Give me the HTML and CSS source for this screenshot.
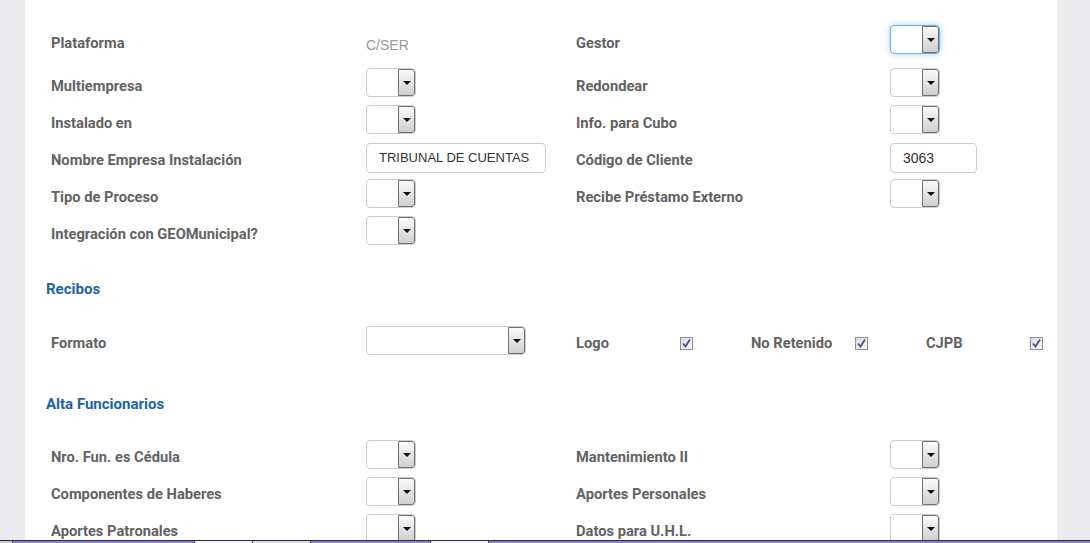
FILE: index.html
```html
<!DOCTYPE html>
<html lang="es">
<head>
<meta charset="utf-8">
<title>Parámetros</title>
<link rel="stylesheet" href="styles.css">
</head>
<body>
<div class="screen">
  <div class="panel">
    <div class="row first">
      <div class="label">Plataforma</div>
      <div class="value">C/SER</div>
      <div class="label">Gestor</div>
      <div class="field"><span class="select focus"><span class="btn"><span class="tri"></span></span></span></div>
    </div>
    <div class="row">
      <div class="label">Multiempresa</div>
      <div class="field"><span class="select"><span class="btn"><span class="tri"></span></span></span></div>
      <div class="label">Redondear</div>
      <div class="field"><span class="select"><span class="btn"><span class="tri"></span></span></span></div>
    </div>
    <div class="row">
      <div class="label">Instalado en</div>
      <div class="field"><span class="select"><span class="btn"><span class="tri"></span></span></span></div>
      <div class="label">Info. para Cubo</div>
      <div class="field"><span class="select"><span class="btn"><span class="tri"></span></span></span></div>
    </div>
    <div class="row">
      <div class="label">Nombre Empresa Instalación</div>
      <div class="field"><span class="input wide">TRIBUNAL DE CUENTAS</span></div>
      <div class="label">Código de Cliente</div>
      <div class="field"><span class="input num">3063</span></div>
    </div>
    <div class="row">
      <div class="label">Tipo de Proceso</div>
      <div class="field"><span class="select"><span class="btn"><span class="tri"></span></span></span></div>
      <div class="label">Recibe Préstamo Externo</div>
      <div class="field"><span class="select"><span class="btn"><span class="tri"></span></span></span></div>
    </div>
    <div class="row">
      <div class="label">Integración con GEOMunicipal?</div>
      <div class="field"><span class="select"><span class="btn"><span class="tri"></span></span></span></div>
    </div>

    <h2 class="section first-section">Recibos</h2>
    <div class="row formato">
      <div class="label">Formato</div>
      <div class="field"><span class="select long"><span class="btn"><span class="tri"></span></span></span></div>
      <div class="checks">
        <div class="check-group"><span class="label">Logo</span><span class="checkbox"><svg viewBox="0 0 13 13" width="13" height="13"><path d="M3 6.5 L5.5 9.5 L10 2.5" fill="none" stroke="#3b4da6" stroke-width="1.8"/></svg></span></div>
        <div class="check-group"><span class="label">No Retenido</span><span class="checkbox"><svg viewBox="0 0 13 13" width="13" height="13"><path d="M3 6.5 L5.5 9.5 L10 2.5" fill="none" stroke="#3b4da6" stroke-width="1.8"/></svg></span></div>
        <div class="check-group"><span class="label">CJPB</span><span class="checkbox"><svg viewBox="0 0 13 13" width="13" height="13"><path d="M3 6.5 L5.5 9.5 L10 2.5" fill="none" stroke="#3b4da6" stroke-width="1.8"/></svg></span></div>
      </div>
    </div>

    <h2 class="section second-section">Alta Funcionarios</h2>
    <div class="row alta">
      <div class="label">Nro. Fun. es Cédula</div>
      <div class="field"><span class="select"><span class="btn"><span class="tri"></span></span></span></div>
      <div class="label">Mantenimiento II</div>
      <div class="field"><span class="select"><span class="btn"><span class="tri"></span></span></span></div>
    </div>
    <div class="row alta">
      <div class="label">Componentes de Haberes</div>
      <div class="field"><span class="select"><span class="btn"><span class="tri"></span></span></span></div>
      <div class="label">Aportes Personales</div>
      <div class="field"><span class="select"><span class="btn"><span class="tri"></span></span></span></div>
    </div>
    <div class="row alta">
      <div class="label">Aportes Patronales</div>
      <div class="field"><span class="select"><span class="btn"><span class="tri"></span></span></span></div>
      <div class="label">Datos para U.H.L.</div>
      <div class="field"><span class="select"><span class="btn"><span class="tri"></span></span></span></div>
    </div>
  </div>
</div>
<div class="taskbar">
  <span class="seg gray" style="width:13px"></span>
  <span class="seg purple" style="width:182px"></span>
  <span class="seg white" style="width:58px"></span>
  <span class="seg light" style="width:58px"></span>
  <span class="seg purple" style="width:120px"></span>
  <span class="seg white" style="width:58px"></span>
  <span class="seg purple grow"></span>
</div>
</body>
</html>
```
FILE: styles.css
```css
html, body {
  margin: 0;
  padding: 0;
}
body {
  width: 1090px;
  height: 543px;
  overflow: hidden;
  background: #ebebed;
  font-family: Roboto, "Liberation Sans", Arial, sans-serif;
  display: flex;
  flex-direction: column;
}
.screen {
  height: 540px;
  overflow: hidden;
  display: flex;
}
.panel {
  margin-left: 25px;
  width: 1006px;
  background: #ffffff;
  padding: 21px 0 0 26px;
}
.row {
  display: grid;
  grid-template-columns: 315px 210px 314px auto;
  height: 37px;
  align-items: center;
}
.row.first {
  margin-bottom: 6px;
}
.label {
  font-size: 14.7px;
  font-weight: 700;
  color: #626262;
  line-height: 20px;
  padding-top: 6px;
  white-space: nowrap;
}
.value {
  font-family: "Liberation Sans", Arial, sans-serif;
  font-size: 14px;
  color: #999999;
  padding-top: 10px;
}
.field {
  display: flex;
  align-items: center;
}
.select {
  box-sizing: border-box;
  width: 50px;
  height: 29px;
  border: 1px solid #cccccc;
  border-radius: 4px;
  background: #ffffff;
  display: flex;
  justify-content: flex-end;
  overflow: hidden;
}
.select.long {
  width: 160px;
}
.select.focus {
  border-color: #66afe9;
  box-shadow: 0 0 6px rgba(102, 175, 233, 0.6);
}
.btn {
  box-sizing: border-box;
  width: 17px;
  height: 100%;
  border: 1px solid #707070;
  border-radius: 0 3px 3px 0;
  background: linear-gradient(#fbfbfb, #e2e2e2 55%, #cfcfcf);
  display: flex;
  justify-content: center;
  padding-top: 11px;
}
.tri {
  width: 0;
  height: 0;
  border-left: 4px solid transparent;
  border-right: 4px solid transparent;
  border-top: 4px solid #111111;
}
.input {
  box-sizing: border-box;
  height: 30px;
  border: 1px solid #cccccc;
  border-radius: 4px;
  font-family: "Liberation Sans", Arial, sans-serif;
  color: #333333;
  line-height: 28px;
  padding: 0 0 0 12px;
  margin-top: 2px;
  white-space: nowrap;
}
.input.wide {
  width: 180px;
  font-size: 13px;
}
.input.num {
  width: 87px;
  font-size: 14px;
}
.section {
  margin: 30px 0 23px -5px;
  font-size: 15px;
  font-weight: 700;
  color: #1b63a6;
  line-height: 20px;
  height: 20px;
}
.section.second-section {
  margin-top: 35px;
  margin-bottom: 22px;
}
.row.formato .label {
  padding-top: 4px;
}
.row.alta .label {
  padding-top: 4px;
}
.checks {
  grid-column: 3 / 5;
  display: flex;
}
.check-group {
  width: 175px;
  display: flex;
  align-items: center;
}
.check-group .label {
  width: 104px;
  padding-top: 4px;
}
.checkbox {
  box-sizing: border-box;
  width: 13px;
  height: 13px;
  border: 1px solid #8e8f8f;
  background: linear-gradient(135deg, #dcdcdc, #fbfbfb);
  display: flex;
  margin-top: 5px;
}
.checkbox svg {
  margin: -1px;
}
.taskbar {
  height: 3px;
  border-top: 1px solid #2a2a3a;
  box-sizing: border-box;
  display: flex;
}
.seg {
  height: 2px;
  border-right: 1px solid #3a3a4a;
  box-sizing: border-box;
}
.seg.gray { background: #c8c8d0; }
.seg.purple { background: #8c80c8; }
.seg.white { background: #f4f4f8; }
.seg.light { background: #dcdce4; }
.seg.grow { flex: 1; border-right: 0; }
```
